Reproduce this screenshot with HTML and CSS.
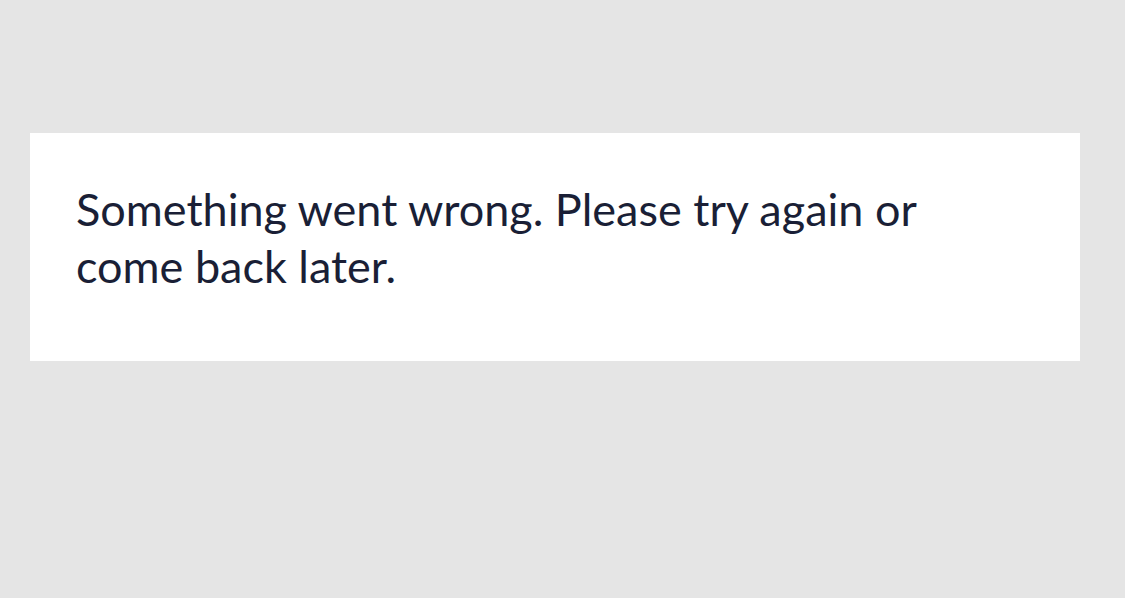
FILE: index.html
```html
<!DOCTYPE html>
<html lang="en">
<head>
<meta charset="utf-8">
<title>Error</title>
<link rel="stylesheet" href="styles.css">
</head>
<body>
<main class="page">
  <section class="card">
    <p class="message">Something went wrong. Please try again or come back later.</p>
  </section>
</main>
</body>
</html>
```

FILE: styles.css
```css
html, body {
  margin: 0;
  padding: 0;
  background: #e5e5e5;
}
.page {
  width: 1125px;
  height: 598px;
  box-sizing: border-box;
  padding: 133px 45px 0 30px;
}
.card {
  background: #ffffff;
  height: 228px;
  box-sizing: border-box;
  padding: 48px 100px 0 46px;
}
.message {
  margin: 0;
  font-family: "Lato", "Noto Sans", sans-serif;
  font-size: 45px;
  line-height: 57px;
  color: #1a1f36;
}
```
